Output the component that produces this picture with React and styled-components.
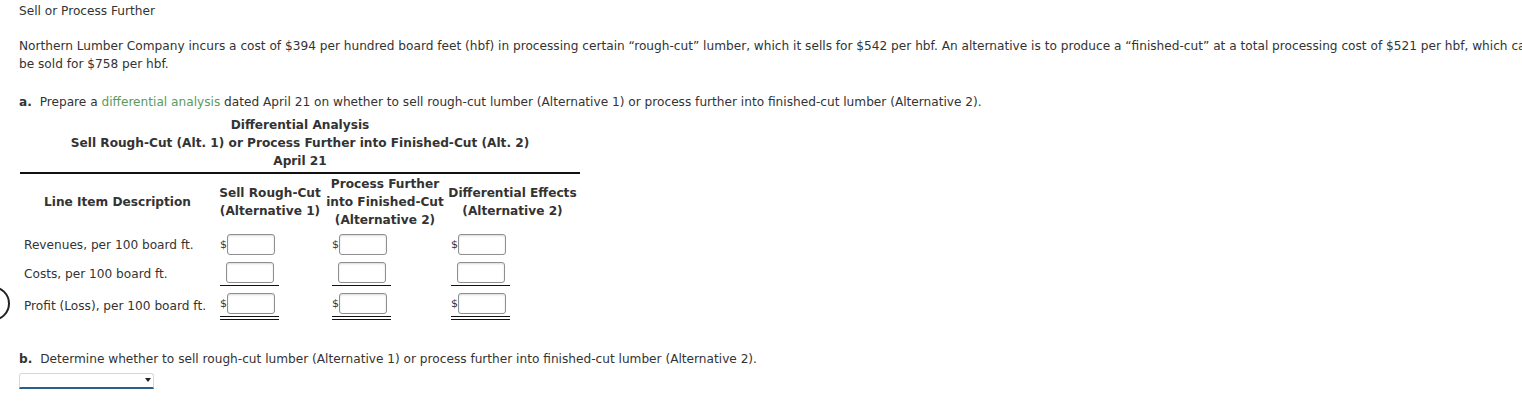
import React from 'react';
import styled, { createGlobalStyle } from 'styled-components';

const GlobalStyle = createGlobalStyle`
  html, body {
    margin: 0;
    padding: 0;
    background: #ffffff;
    overflow: hidden;
  }
  body {
    font-family: "DejaVu Sans", Verdana, sans-serif;
    font-size: 12.15px;
    color: #333333;
  }
`;

const Page = styled.div`
  position: relative;
  width: 1560px;
  padding: 2px 0 0 19px;
  box-sizing: border-box;
`;

const Heading = styled.div`
  line-height: 18px;
  margin: 0 0 17px;
`;

const Intro = styled.p`
  margin: 0 0 20px;
  width: 1526px;
  line-height: 18px;
`;

const Step = styled.p`
  margin: 0;
  line-height: 18px;
`;

const StepLetter = styled.b`
  margin-right: 4px;
`;

const Term = styled.span`
  color: #5a9a5f;
`;

const Analysis = styled.table`
  margin: 5px 0 0 1px;
  width: 560px;
  border-collapse: collapse;
  font-size: 12.15px;
`;

const TitleCell = styled.th`
  padding: 0 0 2px;
  line-height: 18px;
  text-align: center;
  font-weight: bold;
  border-bottom: 2px solid #111;
`;

const HeadCell = styled.th`
  width: ${(p) => p.$width}px;
  height: 56px;
  padding: 0;
  line-height: 18px;
  text-align: center;
  font-weight: bold;
  vertical-align: middle;
`;

const LabelCell = styled.td`
  padding: 0 0 0 4px;
  height: ${(p) => p.$height}px;
  line-height: 18px;
  white-space: nowrap;
  vertical-align: middle;
`;

const AmountCell = styled.td`
  padding: 0 0 0 ${(p) => p.$indent}px;
  height: ${(p) => p.$height}px;
  vertical-align: middle;
`;

const Amount = styled.div`
  display: flex;
  align-items: center;
  width: 59px;
  padding-bottom: ${(p) => (p.$rule ? '2px' : '0')};
  border-bottom: ${(p) =>
    p.$rule === 'double' ? '4px double #111' : p.$rule === 'single' ? '1px solid #111' : 'none'};
`;

const Dollar = styled.span`
  flex: 0 0 6px;
  font-size: 11px;
  line-height: 21px;
  white-space: nowrap;
  position: relative;
  z-index: 1;
`;

const AmountInput = styled.input`
  box-sizing: border-box;
  width: 48px;
  height: 21px;
  margin: 0 0 0 ${(p) => (p.$bare ? 6 : 0)}px;
  border: 1px solid #8f8f8f;
  border-radius: 3px;
  box-shadow: inset 0 1px 2px rgba(0, 0, 0, 0.15);
  background: #fff;
  font: inherit;
`;

const PartB = styled.p`
  margin: 26px 0 0;
  line-height: 18px;
`;

const Select = styled.div`
  position: relative;
  margin-top: 5px;
  width: 133px;
  height: 13px;
  border: 1px solid #d8d8d8;
  border-bottom: 2px solid #2a5f8a;
  border-radius: 3px 3px 0 0;
  background: #fff;
  box-sizing: content-box;
`;

const Caret = styled.span`
  position: absolute;
  right: 2px;
  top: 4px;
  width: 0;
  height: 0;
  border-left: 3px solid transparent;
  border-right: 3px solid transparent;
  border-top: 4px solid #222;
`;

const Ring = styled.div`
  position: absolute;
  left: -25px;
  top: 286px;
  width: 31px;
  height: 31px;
  border: 2px solid #222;
  border-radius: 50%;
`;

const indents = [5, 7, 6];

const rows = [
  { label: 'Revenues, per 100 board ft.', dollar: true, height: 29 },
  { label: 'Costs, per 100 board ft.', dollar: false, height: 29, rule: 'single' },
  { label: 'Profit (Loss), per 100 board ft.', dollar: true, height: 36, rule: 'double' },
];

const App = () => (
  <Page>
    <GlobalStyle />
    <Ring />
    <Heading>Sell or Process Further</Heading>
    <Intro>
      Northern Lumber Company incurs a cost of $394 per hundred board feet (hbf) in processing certain
      “rough-cut” lumber, which it sells for $542 per hbf. An alternative is to produce a “finished-cut” at a
      total processing cost of $521 per hbf, which can be sold for $758 per hbf.
    </Intro>
    <Step>
      <StepLetter>a.</StepLetter> Prepare a <Term>differential analysis</Term> dated April 21 on whether to sell
      rough-cut lumber (Alternative 1) or process further into finished-cut lumber (Alternative 2).
    </Step>
    <Analysis>
      <thead>
        <tr>
          <TitleCell colSpan={4}>
            Differential Analysis
            <br />
            Sell Rough-Cut (Alt. 1) or Process Further into Finished-Cut (Alt. 2)
            <br />
            April 21
          </TitleCell>
        </tr>
        <tr>
          <HeadCell $width={195}>Line Item Description</HeadCell>
          <HeadCell $width={110}>
            Sell Rough-Cut
            <br />
            (Alternative 1)
          </HeadCell>
          <HeadCell $width={120}>
            Process Further
            <br />
            into Finished-Cut
            <br />
            (Alternative 2)
          </HeadCell>
          <HeadCell $width={135}>
            Differential Effects
            <br />
            (Alternative 2)
          </HeadCell>
        </tr>
      </thead>
      <tbody>
        {rows.map((row) => (
          <tr key={row.label}>
            <LabelCell $height={row.height}>{row.label}</LabelCell>
            {indents.map((indent) => (
              <AmountCell key={indent} $indent={indent} $height={row.height}>
                <Amount $rule={row.rule}>
                  {row.dollar && <Dollar>$</Dollar>}
                  <AmountInput type="text" $bare={!row.dollar} />
                </Amount>
              </AmountCell>
            ))}
          </tr>
        ))}
      </tbody>
    </Analysis>
    <PartB>
      <StepLetter>b.</StepLetter> Determine whether to sell rough-cut lumber (Alternative 1) or process further
      into finished-cut lumber (Alternative 2).
    </PartB>
    <Select>
      <Caret />
    </Select>
  </Page>
);

export default App;
